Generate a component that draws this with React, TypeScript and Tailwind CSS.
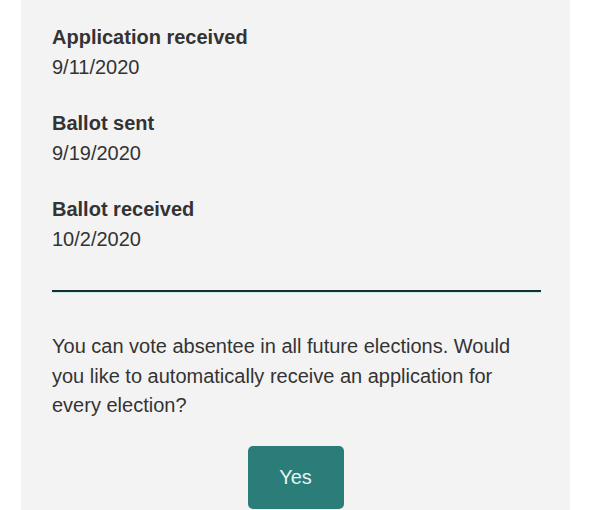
export default function App() {
    const items = [
        { label: "Application received", date: "9/11/2020" },
        { label: "Ballot sent", date: "9/19/2020" },
        { label: "Ballot received", date: "10/2/2020" },
    ];

    return (
        <div className="h-[510px] w-[591px] overflow-hidden bg-white font-['Liberation_Sans',Arial,sans-serif] text-[#333]">
            <div className="mx-[21px] h-full bg-[#f3f3f3] px-[31px] pt-[22px]">
                {/* Status timeline */}
                <div className="flex flex-col gap-[26px]">
                    {items.map((item) => (
                        <div key={item.label}>
                            <div className="text-[20px] font-bold leading-[30px]">{item.label}</div>
                            <div className="text-[20px] leading-[30px]">{item.date}</div>
                        </div>
                    ))}
                </div>

                <div className="mt-[36px] mr-[-2px] border-b-2 border-[#1c2d2d] shadow-[0_1px_0_#c4ece7]" />

                {/* Permanent absentee prompt */}
                <p className="mt-[40px] text-[20px] leading-[29.5px]">
                    You can vote absentee in all future elections. Would you like to automatically receive an
                    application for every election?
                </p>
                <div className="mt-[25px] flex justify-center">
                    <button className="h-[63px] w-[96px] rounded-[5px] bg-[#2a7d78] text-[20px] text-[#e6f4f2]">
                        Yes
                    </button>
                </div>
            </div>
        </div>
    );
}
